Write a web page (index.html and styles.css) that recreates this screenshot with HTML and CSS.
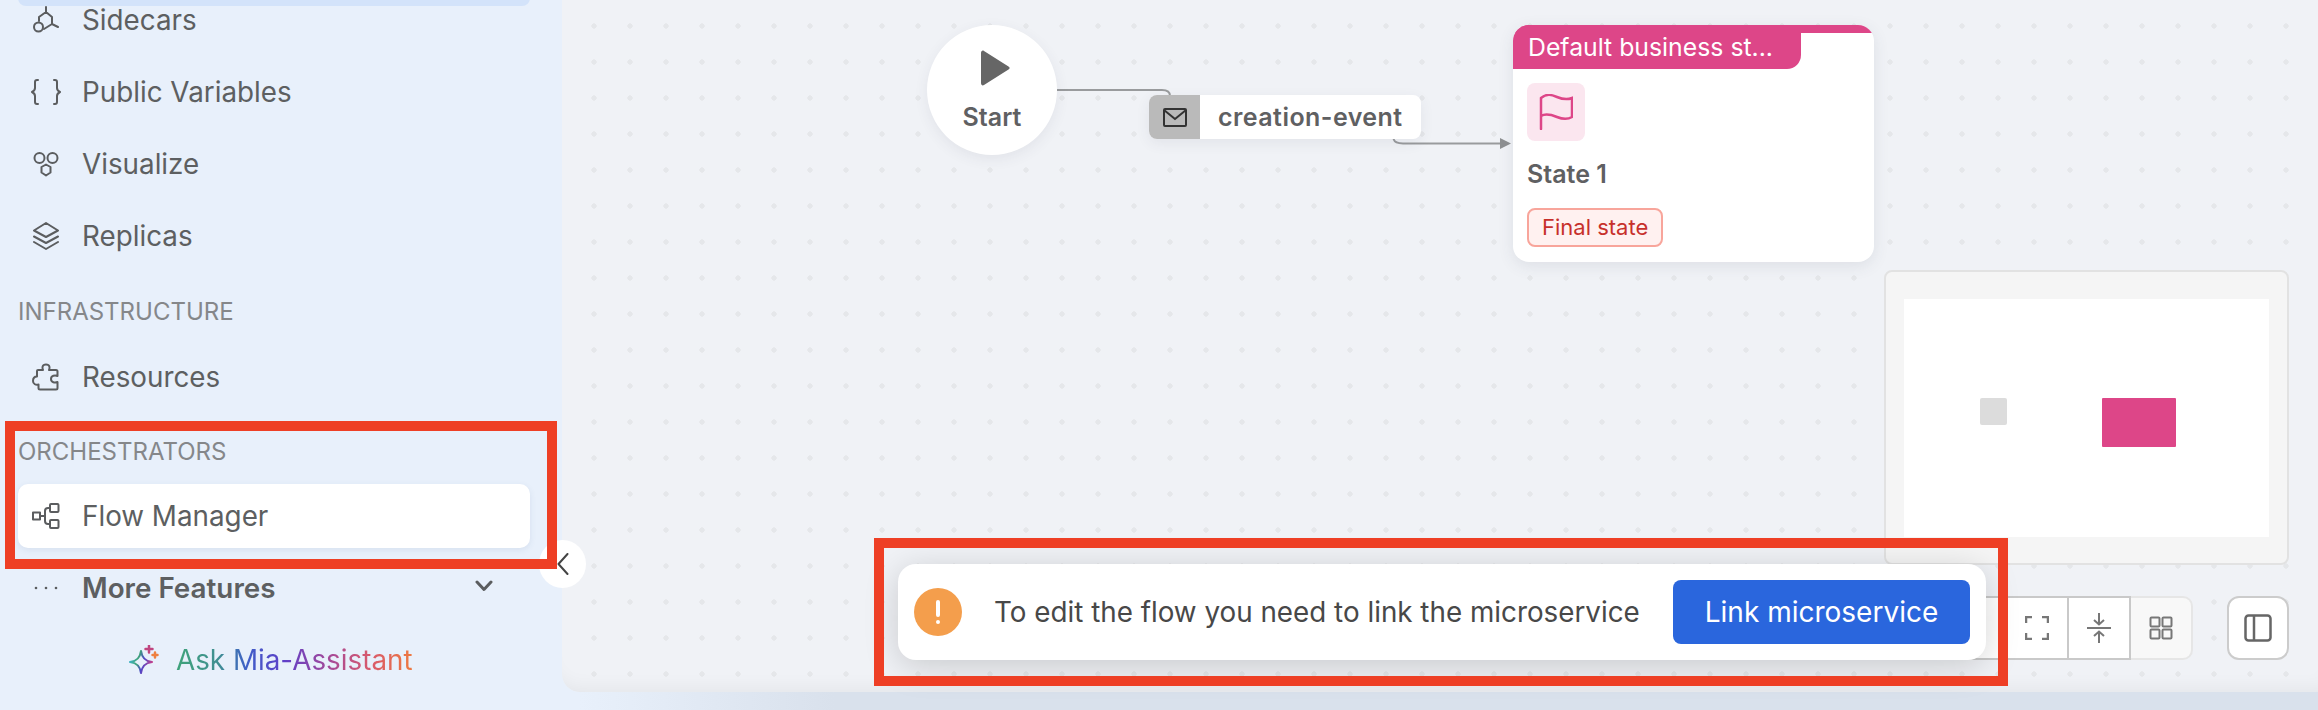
FILE: index.html
```html
<!DOCTYPE html>
<html lang="en">
<head>
<meta charset="utf-8">
<title>Flow Manager</title>
<link rel="stylesheet" href="styles.css">
</head>
<body>
<div class="shell">
  <aside class="sidebar">
    <div class="nav-current"></div>
    <div class="nav-item nav-first">
      <svg class="ico" viewBox="0 0 28 28"><path d="M14 1V6M14 6L7 11V15M14 6L20 11V18M20 18L26 21M20 18L12 23"/><circle cx="6.5" cy="21" r="4.5"/></svg>
      <span>Sidecars</span>
    </div>
    <div class="nav-item">
      <svg class="ico ico-wide" viewBox="0 0 30 28"><path d="M7 2H6C4.5 2 4 3 4 4V10C4 12 3 13 1 14C3 15 4 16 4 18V24C4 25 4.5 26 6 26H7M23 2H24C25.5 2 26 3 26 4V10C26 12 27 13 29 14C27 15 26 16 26 18V24C26 25 25.500 26 24 26H23"/></svg>
      <span>Public Variables</span>
    </div>
    <div class="nav-item">
      <svg class="ico" viewBox="0 0 28 28"><circle cx="7.500" cy="8" r="5"/><circle cx="20.500" cy="8" r="5"/><path d="M14 14.500L18.500 17V22.500L14 25.500L9.500 22.500V17Z"/></svg>
      <span>Visualize</span>
    </div>
    <div class="nav-item">
      <svg class="ico" viewBox="0 0 28 28"><path d="M14 1L26 8.500L14 15L2 8.500ZM2 14.500L14 21L26 14.500M2 20L14 27L26 20"/></svg>
      <span>Replicas</span>
    </div>

    <div class="section section-infra">INFRASTRUCTURE</div>
    <div class="nav-item nav-after-section">
      <svg class="ico" viewBox="0 0 28 28"><path d="M6 7H11C10 5 10 1.500 14 1.500C18 1.500 18 5 17 7H24C25 7 25.500 7.500 25.500 8.500V13C23 12 19 12.500 19 16C19 19.500 23 20 25.500 19V25C25.500 26 25 26.500 24 26.500H8C7 26.500 6.500 26 6.500 25V21.500C4 22.500 1 21 1 18C1 15.500 2.500 13.500 5 13.500V8C5 7.500 5.500 7 6 7Z"/></svg>
      <span>Resources</span>
    </div>

    <div class="section section-orch">ORCHESTRATORS</div>
    <div class="nav-item nav-active">
      <svg class="ico" viewBox="0 0 28 28"><rect x="1" y="10.500" width="7" height="7"/><rect x="18" y="2" width="8.500" height="8" rx="1"/><rect x="18" y="18" width="8.500" height="8" rx="1"/><path d="M8 14H13M18 6H16C14 6 13 7 13 9V19C13 21 14 22 16 22H18"/></svg>
      <span>Flow Manager</span>
    </div>
    <div class="nav-item nav-more">
      <svg class="ico" viewBox="0 0 28 28"><circle class="dot" cx="4" cy="14" r="1.300"/><circle class="dot" cx="14" cy="14" r="1.300"/><circle class="dot" cx="24" cy="14" r="1.300"/></svg>
      <span class="more-label">More Features</span>
      <svg class="chevron" viewBox="0 0 18 12"><path d="M2 2L9 9.500L16 2"/></svg>
    </div>
    <div class="assistant">
      <svg class="spark" viewBox="0 0 30 30">
        <defs>
          <linearGradient id="sparkGrad" x1="0" y1="0.300" x2="1" y2="0.600">
            <stop offset="0" stop-color="#3fb4c8"/>
            <stop offset="0.350" stop-color="#3fa37a"/>
            <stop offset="0.600" stop-color="#4d46c8"/>
            <stop offset="1" stop-color="#c7408a"/>
          </linearGradient>
        </defs>
        <path class="spark-star" d="M12 6C13 13 16 16 23 17C16 18 13 21 12 28C11 21 8 18 1 17C8 16 11 13 12 6Z"/>
        <path class="spark-plus-a" d="M20 0.500V7.500M16.500 4H23.500"/>
        <path class="spark-plus-b" d="M26 7.500V12.500M23.500 10H28.500"/>
      </svg>
      <span class="assistant-text">Ask Mia-Assistant</span>
    </div>
  </aside>

  <main class="canvas">
    <svg class="edges" width="1756" height="692" viewBox="0 0 1756 692">
      <path class="edge" d="M495 90H600Q608 90 608 96"/>
      <path class="edge" d="M831.500 139Q833 143.500 841 143.500H939"/>
      <polygon class="edge-head" points="949,143.500 938,138 938,149"/>
    </svg>

    <div class="start-node">
      <svg class="play" viewBox="0 0 30 36"><path d="M1 3C1 1 2.500 0 4 1L28.500 16.500C30 17.500 30 18.500 28.500 19.500L4 35C2.500 36 1 35 1 33Z"/></svg>
      <span class="start-label">Start</span>
    </div>

    <div class="event-node">
      <div class="event-icon">
        <svg class="envelope" viewBox="0 0 24 19"><rect x="1" y="1" width="22" height="17" rx="1"/><path d="M1 2L12 11L23 2"/></svg>
      </div>
      <span class="event-label">creation-event</span>
    </div>

    <div class="state-card">
      <div class="state-top">
        <div class="state-tab">Default business st...</div>
      </div>
      <div class="state-body">
        <div class="state-icon">
          <svg class="flag" viewBox="0 0 34 36"><path d="M2 35V4C8 -1 13 1 18 3C24 5.500 28 6 33 4V23C28 26 24 25.500 18 23C13 21 7 19 2 22"/></svg>
        </div>
        <div class="state-name">State 1</div>
        <span class="state-tag">Final state</span>
      </div>
    </div>

    <div class="minimap">
      <div class="minimap-view">
        <div class="mini-start"></div>
        <div class="mini-state"></div>
      </div>
    </div>

    <div class="toolbar">
      <div class="tool-group">
        <div class="tool-cell"><svg class="tool-ico" viewBox="0 0 24 24"><path d="M2 12H22M12 2V22"/></svg></div>
        <div class="tool-cell"><svg class="tool-ico" viewBox="0 0 24 24"><path d="M1 12H23"/></svg></div>
        <div class="tool-cell"><svg class="tool-ico tool-ico-fit" viewBox="0 0 24 24"><path d="M1 7V1H7M17 1H23V7M23 17V23H17M7 23H1V17"/></svg></div>
        <div class="tool-cell"><svg class="tool-ico tool-ico-lg" viewBox="0 0 24 32"><path d="M0 16H24M12 1V12M7 8L12 12.500L17 8M12 31V20M7 24L12 19.500L17 24"/></svg></div>
        <div class="tool-cell tool-cell-off"><svg class="tool-ico" viewBox="0 0 24 24"><rect x="1.500" y="1.500" width="9" height="9" rx="1"/><rect x="13.500" y="1.500" width="9" height="9" rx="1"/><rect x="1.500" y="13.500" width="9" height="9" rx="1"/><rect x="13.500" y="13.500" width="9" height="9" rx="1"/></svg></div>
      </div>
      <div class="panel-btn"><svg class="panel-ico" viewBox="0 0 28 28"><rect x="1.500" y="1.500" width="25" height="25" rx="3"/><path d="M10 1.500V26.500"/></svg></div>
    </div>

    <div class="toast">
      <div class="toast-icon"><span class="toast-bang"></span><span class="toast-dot"></span></div>
      <span class="toast-text">To edit the flow you need to link the microservice</span>
      <button class="toast-btn" type="button">Link microservice</button>
    </div>
  </main>

  <div class="collapse-btn"><svg class="collapse-ico" viewBox="0 0 12 22"><path d="M10.500 1L1.500 11L10.500 21"/></svg></div>
  <div class="mark mark-nav"></div>
  <div class="mark mark-toast"></div>
</div>
</body>
</html>
```

FILE: styles.css
```css
* { box-sizing: border-box; }

html, body {
  margin: 0;
  padding: 0;
  width: 2318px;
  height: 710px;
  overflow: hidden;
}

body {
  font-family: "Inter", "Liberation Sans", sans-serif;
  color: #5b5d5f;
}

.shell {
  position: relative;
  display: flex;
  align-items: flex-start;
  width: 2318px;
  height: 710px;
  overflow: hidden;
  background: linear-gradient(90deg, #e8f0fb 25%, #d9e1ec 36%);
}

/* Sidebar */
.sidebar {
  flex: 0 0 562px;
  height: 710px;
  padding: 0 32px 0 18px;
  display: flex;
  flex-direction: column;
  overflow: hidden;
  background: #e8f0fb;
}

.nav-current {
  flex: none;
  height: 20px;
  margin-top: -14px;
  border-radius: 0 0 8px 8px;
  background: #d3e3fa;
}

.nav-item {
  flex: none;
  display: flex;
  align-items: center;
  gap: 22px;
  height: 64px;
  margin-top: 8px;
  padding-left: 14px;
  font-size: 27.800px;
  line-height: 32px;
  color: #5d5f61;
}

.nav-first { margin-top: -18px; }
.nav-after-section { margin-top: 19px; }

.nav-active {
  margin-top: 18px;
  border-radius: 10px;
  background: #fff;
  box-shadow: 0 2px 6px rgba(60, 90, 140, 0.1);
}

.nav-more { position: relative; }

.more-label { font-weight: 600; }

.ico {
  flex: none;
  width: 28px;
  height: 28px;
  fill: none;
  stroke: #5b5d5f;
  stroke-width: 2;
  stroke-linejoin: round;
  stroke-linecap: round;
}

.ico-wide { width: 30px; margin: 0 -1px; }

.ico .dot { fill: #5b5d5f; stroke: none; }

.chevron {
  flex: none;
  width: 18px;
  height: 12px;
  margin-left: auto;
  margin-right: 37px;
  margin-top: -4px;
  fill: none;
  stroke: #5b5d5f;
  stroke-width: 3;
  stroke-linecap: round;
  stroke-linejoin: round;
}

.section {
  flex: none;
  height: 28px;
  font-size: 24px;
  line-height: 28px;
  color: #85878a;
}

.section-infra { margin-top: 30px; }
.section-orch { margin-top: 29px; }

.assistant {
  flex: none;
  display: flex;
  align-items: center;
  gap: 17px;
  height: 40px;
  margin-top: 20px;
  padding-left: 111px;
}

.spark {
  flex: none;
  width: 30px;
  height: 30px;
  fill: none;
  stroke-width: 2;
  stroke-linecap: round;
  stroke-linejoin: round;
}

.spark-star { stroke: url(#sparkGrad); }
.spark-plus-a { stroke: #c0457f; stroke-width: 2.500; }
.spark-plus-b { stroke: #ee8040; stroke-width: 2.500; }

.assistant-text {
  font-size: 27.800px;
  line-height: 32px;
  color: transparent;
  background: linear-gradient(90deg, #3fa37a 0%, #3f8f92 18%, #3f5fc8 30%, #5f3fc8 46%, #a94a95 66%, #d85a6c 82%, #ee7a40 100%);
  -webkit-background-clip: text;
  background-clip: text;
}

/* Canvas */
.canvas {
  position: relative;
  flex: 1;
  height: 692px;
  border-bottom-left-radius: 18px;
  background-color: #f0f2f6;
  background-image: radial-gradient(circle at center, #e5e7ea 2.400px, transparent 2.900px);
  background-size: 36px 36px;
  background-position: 14px 8px;
  box-shadow: inset 0 -18px 22px -18px rgba(0, 0, 0, 0.07);
}

.edges {
  position: absolute;
  left: 0;
  top: 0;
}

.edge {
  fill: none;
  stroke: #999b9d;
  stroke-width: 2;
}

.edge-head { fill: #8e9092; }

.start-node {
  position: absolute;
  left: 365px;
  top: 25px;
  width: 130px;
  height: 130px;
  border-radius: 50%;
  display: flex;
  flex-direction: column;
  align-items: center;
  background: #fff;
  box-shadow: 0 4px 14px rgba(60, 70, 90, 0.08);
}

.play {
  width: 30px;
  height: 36px;
  margin-top: 25px;
  margin-left: 6px;
  fill: #666;
}

.start-label {
  margin-top: 16px;
  font-size: 25px;
  line-height: 30px;
  font-weight: 600;
  color: #5f6062;
}

.event-node {
  position: absolute;
  left: 587px;
  top: 95px;
  width: 272px;
  height: 44px;
  display: flex;
  align-items: center;
  border-radius: 8px;
  background: #fff;
  box-shadow: 0 4px 14px rgba(60, 70, 90, 0.08);
}

.event-icon {
  flex: none;
  width: 51px;
  height: 44px;
  display: flex;
  align-items: center;
  justify-content: center;
  border-radius: 8px 0 0 8px;
  background: #bababa;
}

.envelope {
  width: 24px;
  height: 19px;
  fill: none;
  stroke: #333;
  stroke-width: 2;
}

.event-label {
  margin-left: 18px;
  font-size: 25px;
  line-height: 30px;
  font-weight: 600;
  letter-spacing: 0.450px;
  color: #5f6062;
}

.state-card {
  position: absolute;
  left: 951px;
  top: 25px;
  width: 361px;
  height: 237px;
  border-radius: 16px;
  overflow: hidden;
  background: #fff;
  box-shadow: 0 4px 16px rgba(60, 70, 90, 0.1);
}

.state-top {
  height: 44px;
  background: linear-gradient(#dd4688 8px, transparent 8px);
}

.state-tab {
  width: 288px;
  height: 44px;
  padding-left: 15px;
  border-bottom-right-radius: 14px;
  font-size: 24.800px;
  line-height: 44px;
  color: #fff;
  background: #dd4688;
}

.state-body {
  padding: 14px 14px 0;
}

.state-icon {
  width: 58px;
  height: 58px;
  display: flex;
  align-items: center;
  justify-content: center;
  border-radius: 8px;
  background: #fbe6ef;
}

.flag {
  width: 34px;
  height: 36px;
  fill: none;
  stroke: #dd4688;
  stroke-width: 2.500;
  stroke-linecap: round;
}

.state-name {
  margin-top: 18px;
  font-size: 25px;
  line-height: 30px;
  font-weight: 600;
  color: #5f6062;
}

.state-tag {
  display: inline-block;
  height: 39px;
  margin-top: 19px;
  padding: 0 13px;
  border: 2px solid #f8a59b;
  border-radius: 8px;
  font-size: 22px;
  line-height: 35px;
  color: #c7302b;
  background: #fff1f0;
}

/* Minimap */
.minimap {
  position: absolute;
  right: 29px;
  top: 270px;
  width: 405px;
  height: 295px;
  padding: 27px 18px 26px;
  border: 2px solid #e2e2e2;
  border-radius: 8px;
  background: #f5f5f5;
}

.minimap-view {
  height: 238px;
  display: flex;
  align-items: flex-start;
  gap: 95px;
  padding: 99px 0 0 76px;
  background: #fff;
}

.mini-start {
  width: 27px;
  height: 27px;
  border-radius: 2px;
  background: #dcdcdc;
}

.mini-state {
  width: 74px;
  height: 49px;
  border-radius: 1px;
  background: #dd4688;
}

/* Toolbar */
.toolbar {
  position: absolute;
  right: 29px;
  top: 596px;
  display: flex;
  gap: 34px;
}

.tool-group {
  display: flex;
  height: 64px;
  border-radius: 0 10px 10px 0;
}

.tool-cell {
  width: 62px;
  height: 64px;
  display: flex;
  align-items: center;
  justify-content: center;
  border: 2px solid #c9c9c9;
  border-left-width: 0;
  background: #fff;
}

.tool-cell-off {
  border-color: #e6e6e6;
  border-radius: 0 10px 10px 0;
  background: #f8f8f8;
}

.tool-ico {
  width: 24px;
  height: 24px;
  fill: none;
  stroke: #777;
  stroke-width: 2;
}

.tool-ico-fit { stroke-width: 2.500; }

.tool-ico-lg { height: 32px; }

.panel-btn {
  width: 62px;
  height: 64px;
  display: flex;
  align-items: center;
  justify-content: center;
  border: 2px solid #ccc;
  border-radius: 12px;
  background: #fff;
}

.panel-ico {
  width: 28px;
  height: 28px;
  fill: none;
  stroke: #666;
  stroke-width: 2.500;
}

/* Toast */
.toast {
  position: absolute;
  left: 336px;
  top: 564px;
  width: 1088px;
  height: 96px;
  display: flex;
  align-items: center;
  padding: 0 16px 0 16px;
  border-radius: 18px;
  background: #fff;
  box-shadow: 0 6px 34px rgba(0, 0, 0, 0.17);
}

.toast-icon {
  flex: none;
  width: 48px;
  height: 48px;
  display: flex;
  flex-direction: column;
  align-items: center;
  justify-content: center;
  gap: 3px;
  border-radius: 50%;
  background: #f49e4c;
}

.toast-bang {
  width: 4px;
  height: 17px;
  border-radius: 2px;
  background: #fff;
}

.toast-dot {
  width: 4px;
  height: 4px;
  border-radius: 50%;
  background: #fff;
}

.toast-text {
  margin-left: 32px;
  font-size: 27.800px;
  line-height: 32px;
  white-space: nowrap;
  color: #484848;
}

.toast-btn {
  width: 297px;
  height: 64px;
  margin-left: auto;
  padding: 0;
  border: 0;
  border-radius: 8px;
  font-family: inherit;
  font-size: 28px;
  line-height: 32px;
  color: #fff;
  background: #2a66dd;
}

/* Overlays */
.collapse-btn {
  position: absolute;
  left: 539px;
  top: 540px;
  width: 47px;
  height: 48px;
  display: flex;
  align-items: center;
  justify-content: center;
  border-radius: 50%;
  background: #fff;
}

.collapse-ico {
  width: 12px;
  height: 22px;
  margin-left: 1px;
  fill: none;
  stroke: #444;
  stroke-width: 2;
  stroke-linecap: round;
  stroke-linejoin: round;
}

.mark {
  position: absolute;
  border: 10px solid #ee3f25;
}

.mark-nav {
  left: 5px;
  top: 421px;
  width: 552px;
  height: 148px;
}

.mark-toast {
  left: 874px;
  top: 538px;
  width: 1134px;
  height: 148px;
}
```
